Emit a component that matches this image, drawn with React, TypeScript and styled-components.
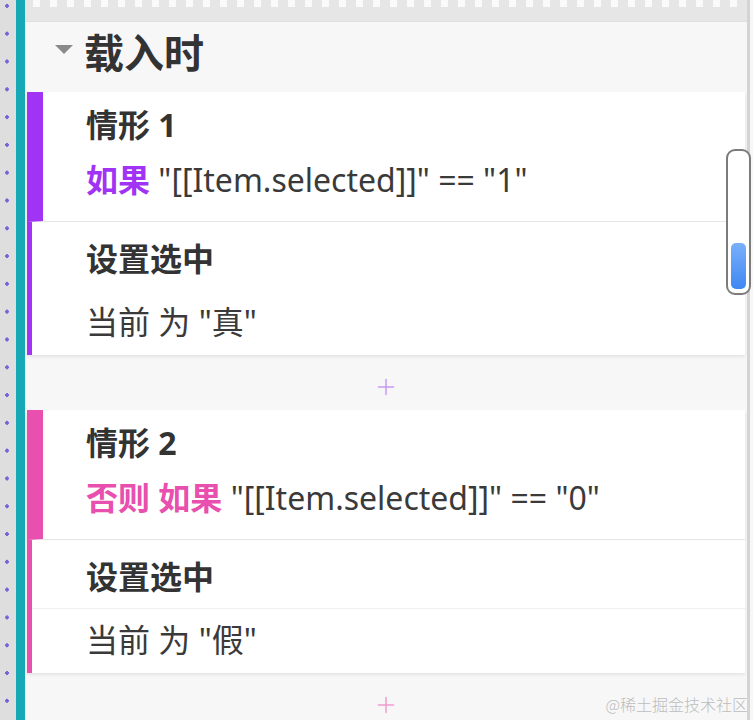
import React from 'react';
import styled, { createGlobalStyle } from 'styled-components';
import { Plus } from 'lucide-react';

const GlobalStyle = createGlobalStyle`
  html, body {
    margin: 0;
    padding: 0;
    background: #f7f7f7;
  }
  body {
    font-family: "Noto Sans", "Noto Sans CJK SC", sans-serif;
    color: #333;
  }
`;

const Page = styled.div`
  position: relative;
  display: flex;
  width: 753px;
  height: 720px;
  overflow: hidden;
`;

const Ruler = styled.div`
  width: 16px;
  flex-shrink: 0;
  background-color: #dedede;
  background-image: radial-gradient(circle, #7a62d9 1.6px, transparent 2.1px);
  background-size: 14px 27.8px;
  background-position: 0 -8px;
  background-repeat: repeat-y;
`;

const Guide = styled.div`
  width: 9px;
  flex-shrink: 0;
  background: #17a8b6;
`;

const Panel = styled.div`
  flex: 1;
  display: flex;
  flex-direction: column;
  background: #f7f7f7;
  border-right: 3px solid #d4d4d4;
  margin-right: 3px;

  & > * {
    flex-shrink: 0;
  }
`;

const TopBand = styled.div`
  height: 21px;
  background:
    repeating-linear-gradient(90deg, transparent 0 8px, #fafafa 8px 15px, transparent 15px 17px) top / 100% 7px no-repeat,
    #e6e6e6;
  border-bottom: 1px solid #e0e0e0;
`;

const EventHeader = styled.div`
  height: 70px;
  box-sizing: border-box;
  padding: 0 0 12px 30px;
  display: flex;
  align-items: center;
  gap: 11px;
  font-size: 40px;
  font-weight: 700;
  color: #333;
`;

const Caret = styled.span`
  width: 0;
  height: 0;
  border-left: 9px solid transparent;
  border-right: 9px solid transparent;
  border-top: 9px solid #8a8a8a;
  margin-top: -4px;
`;

const Case = styled.div`
  display: flex;
  flex-direction: column;
  margin-left: 2px;
  margin-right: 2px;
  box-shadow: 0 2px 3px rgba(0, 0, 0, 0.08);
`;

const Condition = styled.div<{ $color: string }>`
  height: 130px;
  box-sizing: border-box;
  display: flex;
  flex-direction: column;
  gap: 19px;
  padding: 15px 0 0 43px;
  background: #fff;
  border-left: 16px solid ${p => p.$color};
  border-bottom: 1px solid #e6e6e6;
  box-shadow: 0 2px 3px rgba(0, 0, 0, 0.05);
`;

const Action = styled.div<{ $color: string }>`
  height: 133px;
  box-sizing: border-box;
  display: flex;
  flex-direction: column;
  background: #fff;
  border-left: 5px solid ${p => p.$color};
  padding: 5px 0 0 54px;
`;

const ActionRow = styled.div<{ $line?: boolean }>`
  height: 62px;
  display: flex;
  align-items: center;
  border-top: 1px solid ${p => (p.$line ? '#f0f0f0' : 'transparent')};
  margin-left: ${p => (p.$line ? '-54px' : '0')};
  padding-left: ${p => (p.$line ? '54px' : '0')};
`;

const Title = styled.div`
  font-size: 32px;
  font-weight: 700;
  color: #333;
  line-height: 36px;
`;

const Line = styled.div`
  font-size: 32px;
  color: #3a3a3a;
  line-height: 36px;
  white-space: nowrap;
`;

const Keyword = styled.span<{ $color: string }>`
  color: ${p => p.$color};
  font-weight: 700;
`;

const AddRow = styled.div<{ $color: string }>`
  height: 55px;
  box-sizing: border-box;
  padding-top: 8px;
  display: flex;
  align-items: center;
  justify-content: center;
  color: ${p => p.$color};
`;

const Scrollbar = styled.div`
  position: absolute;
  top: 149px;
  right: 2px;
  width: 15px;
  height: 134px;
  border: 2px solid #7c7c7c;
  border-radius: 9px;
  background: #fff;
  display: flex;
  flex-direction: column;
  justify-content: flex-end;
  padding: 4px 3px;
  box-sizing: content-box;
`;

const Thumb = styled.div`
  height: 46px;
  border-radius: 5px;
  background: linear-gradient(180deg, #79b0fb, #3f87f2);
`;

const Watermark = styled.div`
  position: absolute;
  right: 5px;
  bottom: 4px;
  font-family: "Noto Sans CJK SC", sans-serif;
  font-size: 16px;
  font-weight: 300;
  color: #bdbdbd;
`;

const PURPLE = '#a133f5';
const PINK = '#e84fae';

const cases = [
  {
    name: '情形 1',
    color: PURPLE,
    plus: '#c79bf6',
    keyword: '如果',
    expr: ' "[[Item.selected]]" == "1"',
    value: '当前 为 "真"',
    line: false,
  },
  {
    name: '情形 2',
    color: PINK,
    plus: '#f29ccf',
    keyword: '否则 如果',
    expr: ' "[[Item.selected]]" == "0"',
    value: '当前 为 "假"',
    line: true,
  },
];

const App: React.FC = () => {
  return (
    <>
      <GlobalStyle />
      <Page>
        <Ruler />
        <Guide />
        <Panel>
          <TopBand />
          <EventHeader>
            <Caret />
            载入时
          </EventHeader>
          {cases.map(c => (
            <React.Fragment key={c.name}>
              <Case>
                <Condition $color={c.color}>
                  <Title>{c.name}</Title>
                  <Line>
                    <Keyword $color={c.color}>{c.keyword}</Keyword>
                    {c.expr}
                  </Line>
                </Condition>
                <Action $color={c.color}>
                  <ActionRow>
                    <Title>设置选中</Title>
                  </ActionRow>
                  <ActionRow $line={c.line}>
                    <Line>{c.value}</Line>
                  </ActionRow>
                </Action>
              </Case>
              <AddRow $color={c.plus}>
                <Plus size={26} strokeWidth={1.4} />
              </AddRow>
            </React.Fragment>
          ))}
        </Panel>
        <Scrollbar>
          <Thumb />
        </Scrollbar>
        <Watermark>@稀土掘金技术社区</Watermark>
      </Page>
    </>
  );
};

export default App;
